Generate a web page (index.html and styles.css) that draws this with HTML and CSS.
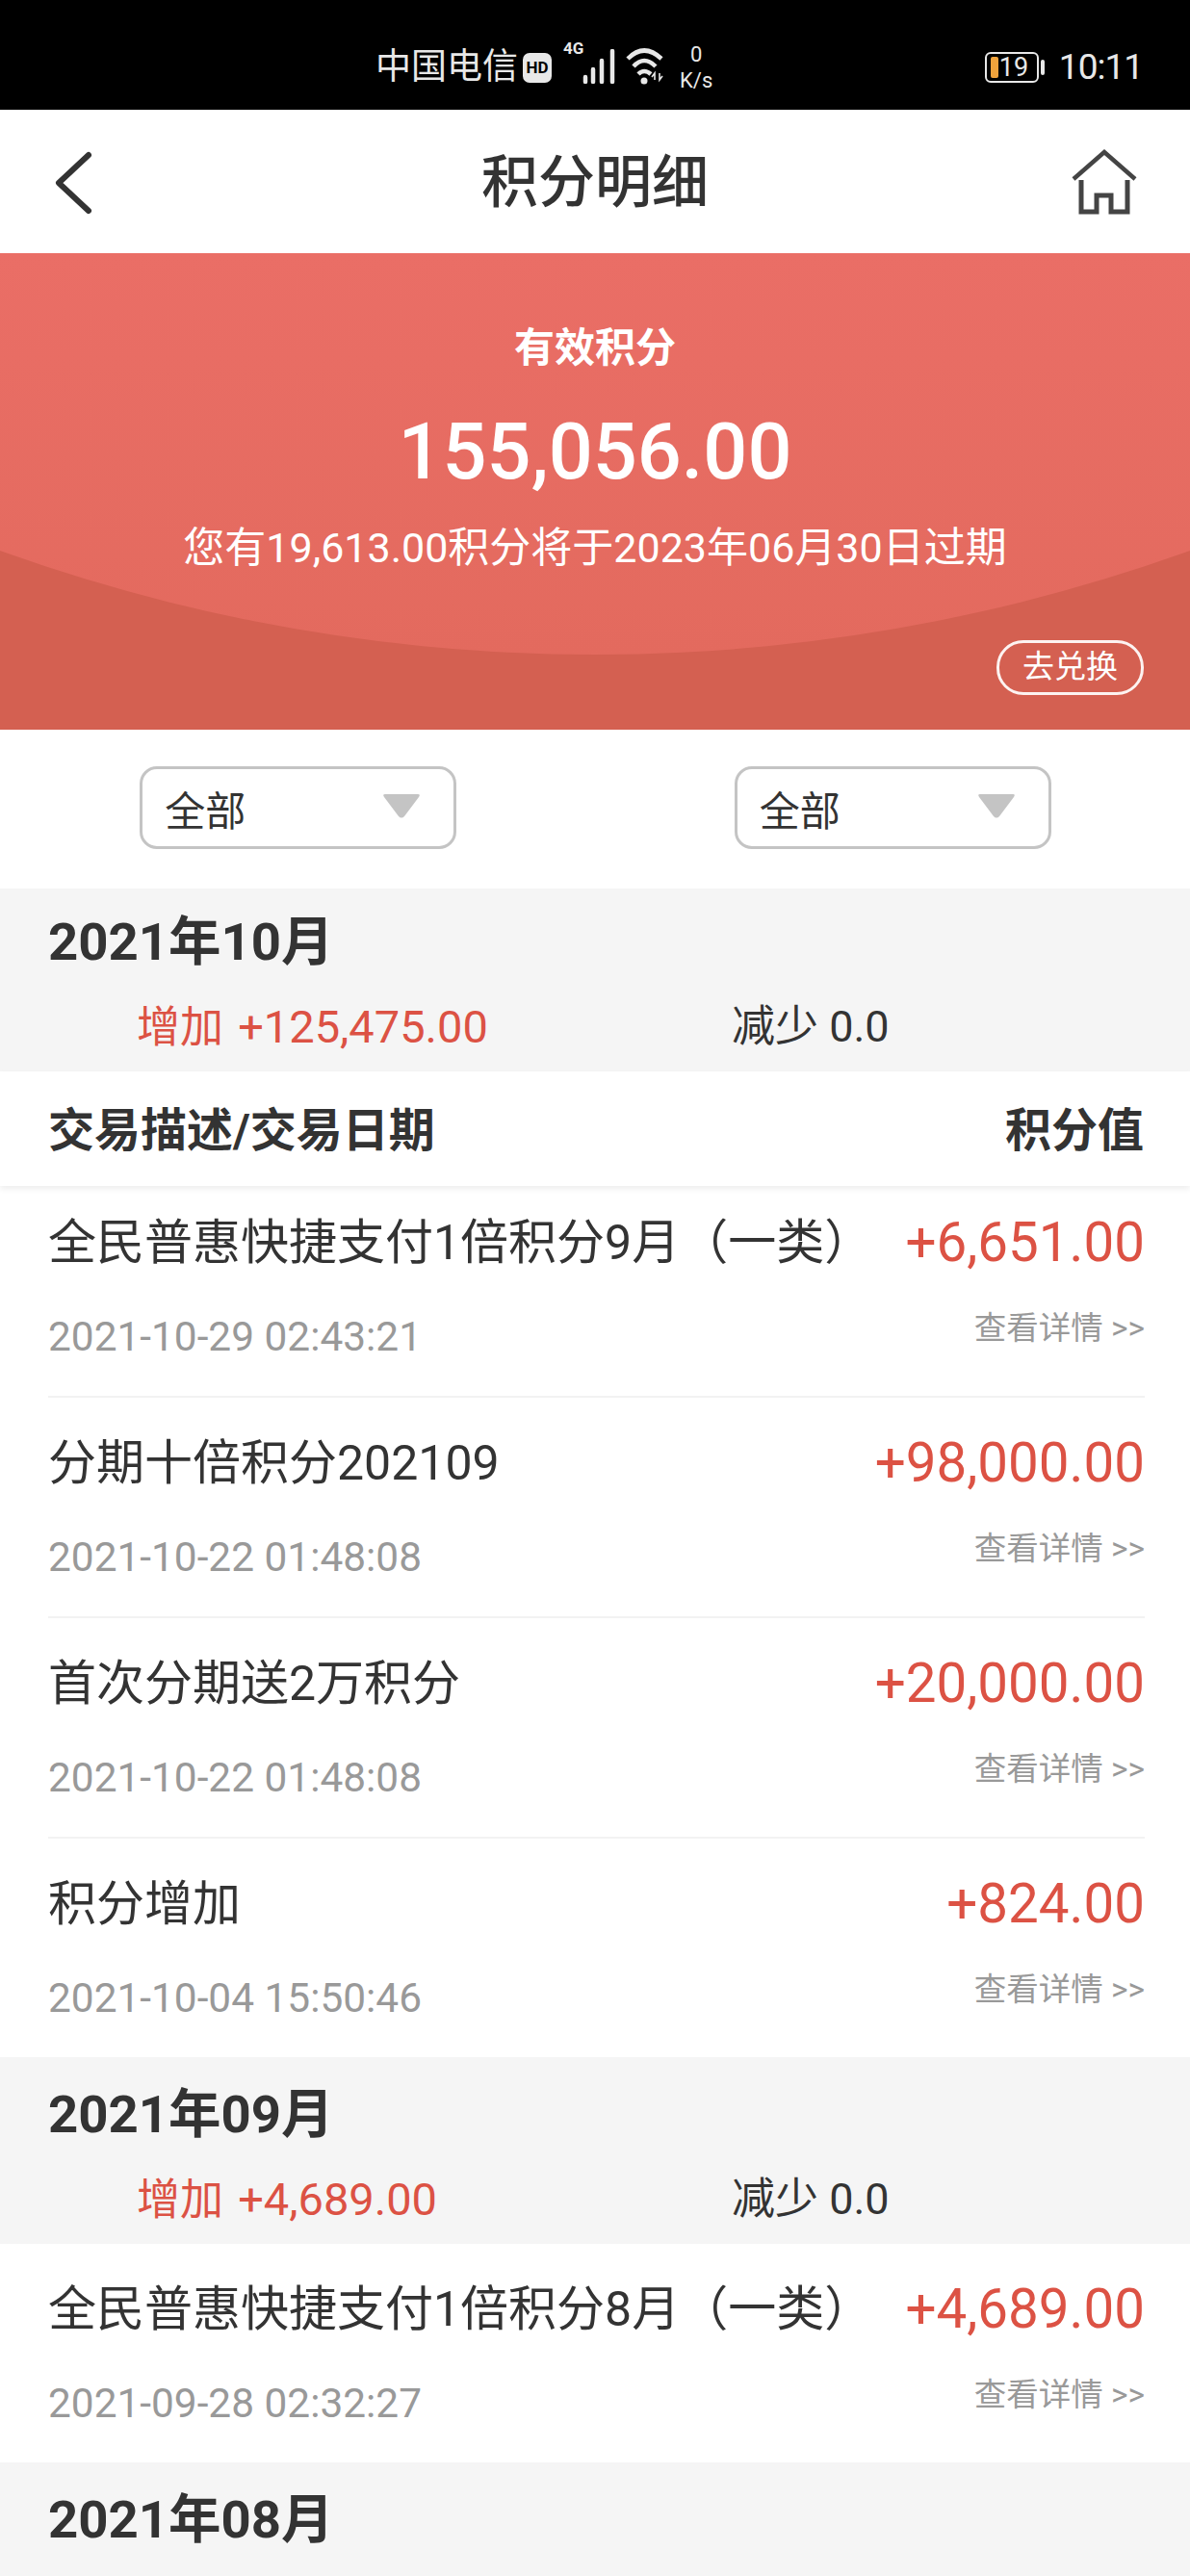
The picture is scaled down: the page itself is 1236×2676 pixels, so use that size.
FILE: index.html
```html
<!DOCTYPE html>
<html lang="zh-CN">
  <head>
    <meta charset="utf-8">
    <title>积分明细</title>
    <link rel="stylesheet" href="styles.css">
  </head>
  <body>
    <div class="status-bar">
      <span class="carrier">中国电信</span>
      <span class="hd-badge">HD</span>
      <span class="net-type">4G</span>
      <svg class="signal" width="36" height="36" viewBox="0 0 36 36">
        <path d="M4 29v5M12 21v13M21 12v22M32 2v32" stroke="#e8e8e8" stroke-width="4.5" stroke-linecap="round" fill="none"/>
      </svg>
      <svg class="wifi" width="40" height="40" viewBox="0 0 40 40">
        <path d="M2 12Q19-5 37 12M8 20Q19 8 31 20M13 28Q19 22 26 28" stroke="#e8e8e8" stroke-width="4.5" fill="none"/>
        <circle cx="19" cy="35" r="3.5" fill="#e8e8e8"/>
        <path d="M30 34v-7l-3 4M35 27v7l3-4" stroke="#e8e8e8" stroke-width="1.6" fill="none"/>
      </svg>
      <span class="speed"><span>0</span><span>K/s</span></span>
      <span class="status-right">
        <span class="battery"><span class="battery-level"></span><span class="battery-num">19</span></span>
        <span class="battery-tip"></span>
        <span class="clock">10:11</span>
      </span>
    </div>

    <div class="nav-bar">
      <svg class="back-icon" width="44" height="70" viewBox="0 0 44 70">
        <path d="M37 7 6 36l31 29" stroke="#333" stroke-width="6" stroke-linecap="round" stroke-linejoin="round" fill="none"/>
      </svg>
      <h1 class="nav-title">积分明细</h1>
      <svg class="home-icon" width="68" height="68" viewBox="0 0 68 68">
        <path d="M2 31 34 3l32 28" stroke="#444" stroke-width="4.5" fill="none"/>
        <path d="M10 32v33h16V48h15v17h17V32" stroke="#444" stroke-width="5" fill="none"/>
      </svg>
    </div>

    <div class="hero">
      <div class="hero-arc"></div>
      <div class="hero-label">有效积分</div>
      <div class="hero-total">155,056.00</div>
      <div class="hero-note">您有19,613.00积分将于2023年06月30日过期</div>
      <div class="hero-action"><a class="redeem-btn">去兑换</a></div>
    </div>

    <div class="filters">
      <div class="select"><span>全部</span><svg width="42" height="28" viewBox="0 0 42 28"><path d="M4 2h34q3 0 1 3L24 25q-3 3-6 0L3 5Q1 2 4 2z" fill="#c4c4c4"/></svg></div>
      <div class="select"><span>全部</span><svg width="42" height="28" viewBox="0 0 42 28"><path d="M4 2h34q3 0 1 3L24 25q-3 3-6 0L3 5Q1 2 4 2z" fill="#c4c4c4"/></svg></div>
    </div>

    <div class="month month-top">
      <div class="month-title">2021年10月</div>
      <div class="month-sum">
        <span class="red">增加 <span class="sum-num">+125,475.00</span></span>
        <span>减少 0.0</span>
      </div>
    </div>

    <div class="col-head">
      <span>交易描述/交易日期</span>
      <span>积分值</span>
    </div>

    <div class="list list-first">
      <div class="row">
        <div>
          <div class="row-title">全民普惠快捷支付1倍积分9月（一类）</div>
          <div class="row-date">2021-10-29 02:43:21</div>
        </div>
        <div class="row-right">
          <div class="row-amount">+6,651.00</div>
          <div class="row-link">查看详情 &gt;&gt;</div>
        </div>
      </div>
      <div class="row">
        <div>
          <div class="row-title">分期十倍积分202109</div>
          <div class="row-date">2021-10-22 01:48:08</div>
        </div>
        <div class="row-right">
          <div class="row-amount">+98,000.00</div>
          <div class="row-link">查看详情 &gt;&gt;</div>
        </div>
      </div>
      <div class="row">
        <div>
          <div class="row-title">首次分期送2万积分</div>
          <div class="row-date">2021-10-22 01:48:08</div>
        </div>
        <div class="row-right">
          <div class="row-amount">+20,000.00</div>
          <div class="row-link">查看详情 &gt;&gt;</div>
        </div>
      </div>
      <div class="row">
        <div>
          <div class="row-title">积分增加</div>
          <div class="row-date">2021-10-04 15:50:46</div>
        </div>
        <div class="row-right">
          <div class="row-amount">+824.00</div>
          <div class="row-link">查看详情 &gt;&gt;</div>
        </div>
      </div>
    </div>

    <div class="month">
      <div class="month-title">2021年09月</div>
      <div class="month-sum">
        <span class="red">增加 <span class="sum-num">+4,689.00</span></span>
        <span>减少 0.0</span>
      </div>
    </div>

    <div class="list">
      <div class="row">
        <div>
          <div class="row-title">全民普惠快捷支付1倍积分8月（一类）</div>
          <div class="row-date">2021-09-28 02:32:27</div>
        </div>
        <div class="row-right">
          <div class="row-amount">+4,689.00</div>
          <div class="row-link">查看详情 &gt;&gt;</div>
        </div>
      </div>
    </div>

    <div class="month">
      <div class="month-title">2021年08月</div>
    </div>
  </body>
</html>
```

FILE: styles.css
```css
html, body {
  margin: 0;
  padding: 0;
  height: 2676px;
  overflow: hidden;
  background: #fff;
}
body {
  font-family: Roboto, "Noto Sans CJK SC", sans-serif;
  color: #333;
}

/* status bar */
.status-bar {
  height: 114px;
  background: #000;
  color: #e8e8e8;
  display: flex;
  align-items: center;
  padding: 0 49px 0 390px;
  box-sizing: border-box;
}
.carrier {
  font-size: 37px;
  line-height: 40px;
  margin-top: 26px;
}
.hd-badge {
  width: 30px;
  height: 31px;
  margin: 26px 0 0 5px;
  border-radius: 7px;
  background: #e8e8e8;
  color: #000;
  font-size: 17px;
  font-weight: 700;
  line-height: 31px;
  text-align: center;
}
.net-type {
  font-size: 17px;
  font-weight: 700;
  line-height: 18px;
  margin: 0 0 14px 12px;
  width: 19px;
}
.signal {
  margin: 24px 0 0 0;
}
.wifi {
  margin: 24px 0 0 10px;
}
.speed {
  display: flex;
  flex-direction: column;
  align-items: center;
  margin: 26px 0 0 16px;
  font-size: 22px;
  line-height: 27px;
}
.status-right {
  margin-left: auto;
  display: flex;
  align-items: center;
  margin-top: 26px;
}
.battery {
  width: 56px;
  height: 32px;
  box-sizing: border-box;
  border: 2px solid #e8e8e8;
  border-radius: 6px;
  display: flex;
  align-items: center;
  padding-left: 4px;
}
.battery-level {
  width: 8px;
  height: 22px;
  background: #f0a33c;
  border-radius: 2px;
}
.battery-num {
  font-size: 27px;
  line-height: 28px;
  margin-left: 1px;
}
.battery-tip {
  width: 4px;
  height: 16px;
  background: #e8e8e8;
  border-radius: 2px;
  margin: 0 15px 0 2px;
}
.clock {
  font-size: 37px;
  line-height: 40px;
  letter-spacing: -1px;
}

/* title bar */
.nav-bar {
  height: 149px;
  display: grid;
  grid-template-columns: 1fr auto 1fr;
  align-items: center;
  padding: 0 55px;
  box-sizing: border-box;
}
.home-icon {
  justify-self: end;
}
.nav-title {
  margin: 2px 0 0;
  font-size: 59px;
  font-weight: 500;
  line-height: 70px;
}

/* points summary */
.hero {
  height: 495px;
  position: relative;
  overflow: hidden;
  background: #d46051;
  color: #fff;
  text-align: center;
  box-sizing: border-box;
  padding-top: 70px;
}
.hero-arc {
  position: absolute;
  left: calc(50% - 1822px);
  bottom: 78px;
  width: 3644px;
  height: 3644px;
  border-radius: 50%;
  background: linear-gradient(to bottom, #ea6e66 calc(100% - 417px), #e36a5e 100%);
}
.hero-label, .hero-total, .hero-note, .hero-action {
  position: relative;
}
.hero-label {
  font-size: 42px;
  font-weight: 700;
  line-height: 58px;
}
.hero-total {
  font-size: 81px;
  font-weight: 500;
  line-height: 96px;
  margin-top: 31px;
}
.hero-note {
  font-size: 43px;
  line-height: 60px;
  margin-top: 21px;
}
.hero-action {
  display: flex;
  justify-content: flex-end;
  padding-right: 48px;
  margin-top: 66px;
}
.redeem-btn {
  width: 153px;
  height: 57px;
  box-sizing: border-box;
  border: 3px solid #fdf3f1;
  border-radius: 28px;
  font-size: 33px;
  line-height: 50px;
}

/* filters */
.filters {
  height: 165px;
  display: grid;
  grid-template-columns: 1fr 1fr;
  justify-items: center;
  align-items: center;
  padding: 0 0 3px 1px;
  box-sizing: border-box;
}
.select {
  width: 329px;
  height: 86px;
  box-sizing: border-box;
  border: 3px solid #c4c4c4;
  border-radius: 18px;
  display: flex;
  align-items: center;
  justify-content: space-between;
  padding: 0 33px 0 23px;
  font-size: 42px;
}
.select svg {
  margin-bottom: 4px;
}

/* month headers */
.month {
  background: #f5f5f5;
  padding: 26px 0 0 50px;
  height: 194px;
  box-sizing: border-box;
}
.month-top {
  padding-top: 22px;
  height: 190px;
}
.month-title {
  font-size: 54.5px;
  font-weight: 700;
  line-height: 66px;
}
.month-sum {
  display: grid;
  grid-template-columns: 618px 1fr;
  margin: 26px 0 0 92px;
  font-size: 45px;
  line-height: 60px;
}
.sum-num {
  font-size: 47px;
  margin-left: 4px;
}
.red {
  color: #dc5244;
}

/* column header */
.col-head {
  height: 119px;
  display: flex;
  align-items: center;
  justify-content: space-between;
  padding: 0 48px 5px 50px;
  font-size: 48px;
  font-weight: 700;
  position: relative;
  z-index: 1;
  background: #fff;
  box-shadow: 0 3px 6px rgba(0, 0, 0, 0.07);
  box-sizing: border-box;
}

/* rows */
.list {
  padding: 0 47px 0 50px;
}
.list-first {
  margin-top: -9px;
}
.row {
  height: 229px;
  box-sizing: border-box;
  display: flex;
  justify-content: space-between;
  padding-top: 34px;
  border-bottom: 2px solid #f2f2f2;
}
.row:last-child {
  height: 227px;
  border-bottom: none;
}
.row-title {
  font-size: 50px;
  line-height: 68px;
}
.row-date {
  font-size: 42.4px;
  line-height: 56px;
  margin-top: 36px;
  color: #999;
}
.row-right {
  text-align: right;
}
.row-amount {
  font-size: 56.5px;
  line-height: 68px;
  color: #dc5244;
}
.row-link {
  font-size: 33.5px;
  line-height: 50px;
  margin-top: 30px;
  color: #999;
}
```
